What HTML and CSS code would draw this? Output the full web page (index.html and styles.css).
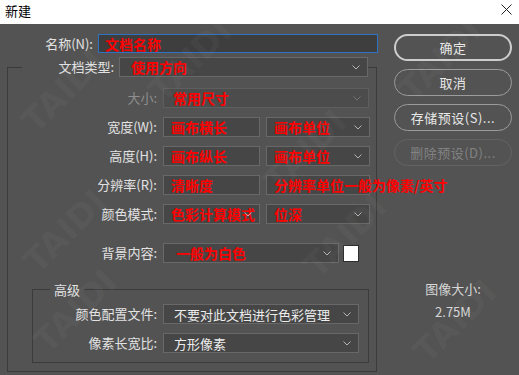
FILE: index.html
```html
<!DOCTYPE html>
<html lang="zh-CN">
<head>
<meta charset="utf-8">
<title>新建</title>
<link rel="stylesheet" href="styles.css">
</head>
<body>
<div class="titlebar">
  <span class="title">新建</span>
  <svg class="close" width="11" height="11" viewBox="0 0 11 11"><path d="M0.5 0.5 L10.5 10.5 M10.5 0.5 L0.5 10.5" stroke="#222" stroke-width="1" fill="none"/></svg>
</div>
<div class="main">
  <div class="left">
    <div class="row name-row">
      <span class="lbl lbl-name">名称(N):</span>
      <div class="box field-name"><span class="val">文档名称</span></div>
    </div>
    <fieldset class="group">
      <legend class="group-head">
        <div class="row">
          <span class="lbl lbl-type">文档类型:</span>
          <div class="box select sel-type"><span class="val indent">使用方向</span><svg class="chev" viewBox="0 0 8 5"><polyline points="0.5,0.5 4,4 7.5,0.5"/></svg></div>
        </div>
      </legend>
      <div class="rows">
        <div class="row">
          <span class="lbl lbl-main dis">大小:</span>
          <div class="box select disabled sel-size"><span class="val">常用尺寸</span><svg class="chev" viewBox="0 0 8 5"><polyline points="0.5,0.5 4,4 7.5,0.5"/></svg></div>
        </div>
        <div class="row">
          <span class="lbl lbl-main">宽度(W):</span>
          <div class="box inp-num"><span class="val">画布横长</span></div>
          <div class="box select sel-unit"><span class="val">画布单位</span><svg class="chev" viewBox="0 0 8 5"><polyline points="0.5,0.5 4,4 7.5,0.5"/></svg></div>
        </div>
        <div class="row">
          <span class="lbl lbl-main">高度(H):</span>
          <div class="box inp-num"><span class="val">画布纵长</span></div>
          <div class="box select sel-unit"><span class="val">画布单位</span><svg class="chev" viewBox="0 0 8 5"><polyline points="0.5,0.5 4,4 7.5,0.5"/></svg></div>
        </div>
        <div class="row">
          <span class="lbl lbl-main">分辨率(R):</span>
          <div class="box inp-num"><span class="val">清晰度</span></div>
          <div class="box select sel-unit"><span class="val">分辨率单位一般为像素/英寸</span></div>
        </div>
        <div class="row">
          <span class="lbl lbl-main">颜色模式:</span>
          <div class="box select inp-num"><span class="val">色彩计算模式</span><svg class="chev" viewBox="0 0 8 5"><polyline points="0.5,0.5 4,4 7.5,0.5"/></svg></div>
          <div class="box select sel-unit"><span class="val">位深</span><svg class="chev" viewBox="0 0 8 5"><polyline points="0.5,0.5 4,4 7.5,0.5"/></svg></div>
        </div>
        <div class="row bg-row">
          <span class="lbl lbl-main">背景内容:</span>
          <div class="box select sel-bg"><span class="val indent">一般为白色</span><svg class="chev" viewBox="0 0 8 5"><polyline points="0.5,0.5 4,4 7.5,0.5"/></svg></div>
          <div class="swatch"></div>
        </div>
      </div>
      <fieldset class="adv">
        <legend class="adv-head">高级</legend>
        <div class="rows">
          <div class="row">
            <span class="lbl lbl-adv">颜色配置文件:</span>
            <div class="box select sel-adv"><span class="val plain">不要对此文档进行色彩管理</span><svg class="chev" viewBox="0 0 8 5"><polyline points="0.5,0.5 4,4 7.5,0.5"/></svg></div>
          </div>
          <div class="row">
            <span class="lbl lbl-adv">像素长宽比:</span>
            <div class="box select sel-adv"><span class="val plain">方形像素</span><svg class="chev" viewBox="0 0 8 5"><polyline points="0.5,0.5 4,4 7.5,0.5"/></svg></div>
          </div>
        </div>
      </fieldset>
    </fieldset>
  </div>
  <div class="right">
    <div class="btn btn-default">确定</div>
    <div class="btn">取消</div>
    <div class="btn">存储预设(S)...</div>
    <div class="btn btn-disabled">删除预设(D)...</div>
    <div class="info">
      <div>图像大小:</div>
      <div class="info-val">2.75M</div>
    </div>
  </div>
</div>
<div class="wm">
  <span class="wm1">TAIDI</span>
  <span class="wm2">TAIDI</span>
  <span class="wm3">TAIDI</span>
  <span class="wm4">TAIDI</span>
  <span class="wm5">TAIDI</span>
  <span class="wm6">TAIDI</span>
  <span class="wm7">TAIDI</span>
  <span class="wm8">TAIDI</span>
</div>
</body>
</html>
```
FILE: styles.css
```css
html, body {
  margin: 0;
  padding: 0;
}
body {
  width: 519px;
  height: 375px;
  overflow: hidden;
  position: relative;
  background: #535353;
  font-family: "Noto Sans CJK SC", "Noto Sans", sans-serif;
  font-size: 13px;
  color: #e0e0e0;
}
.titlebar {
  height: 24px;
  background: #ffffff;
  display: flex;
  justify-content: space-between;
  align-items: flex-start;
  padding: 0 7px 0 5px;
  color: #000;
}
.title {
  font-size: 13px;
  line-height: 22px;
}
.close {
  margin-top: 4px;
}
.main {
  display: flex;
  padding-top: 10px;
}
.left {
  width: 378px;
  flex: none;
}
.right {
  width: 118px;
  margin-left: 16px;
  flex: none;
  display: flex;
  flex-direction: column;
  gap: 8px;
}
.row {
  display: flex;
  align-items: center;
  height: 20px;
}
.lbl {
  flex: none;
  text-align: right;
  white-space: nowrap;
  line-height: 20px;
  color: #e2e2e2;
}
.lbl.dis {
  color: #8e8e8e;
}
.box {
  box-sizing: border-box;
  height: 20px;
  flex: none;
  background: #464646;
  border: 1px solid #686868;
  display: flex;
  align-items: center;
  padding-left: 7px;
}
.val {
  color: #ff0000;
  font-weight: 700;
  font-size: 14px;
  line-height: 1;
  white-space: nowrap;
}
.val.indent {
  padding-left: 5px;
}
.val.plain {
  color: #ececec;
  font-weight: 400;
  font-size: 13px;
  padding-left: 3px;
}
.select .val {
  flex: 1;
  min-width: 0;
}
.chev {
  flex: none;
  width: 8px;
  height: 5px;
  margin: 0 7px 0 3px;
  fill: none;
  stroke: #b4b4b4;
  stroke-width: 1;
}
.disabled {
  background: #4c4c4c;
  border-color: #5e5e5e;
}
.disabled .chev {
  stroke: #747474;
}
.name-row {
  height: 19px;
}
.lbl-name {
  width: 93px;
  margin-right: 5px;
}
.field-name {
  width: 280px;
  height: 19px;
  background: #3e3e3e;
  border: 1px solid #2f72c4;
  padding-left: 6px;
}
fieldset {
  min-width: 0;
  border: 1px solid #3b3b3b;
}
.group {
  margin: 4px 1px 0 7px;
  padding: 11px 7px 8px 0;
}
.group-head {
  margin-left: 14px;
  padding: 0;
}
.lbl-type {
  width: 92px;
  margin-right: 5px;
}
.sel-type {
  width: 249px;
  padding-left: 6px;
}
.rows {
  display: flex;
  flex-direction: column;
  gap: 9px;
}
.rows .bg-row {
  margin-top: 10px;
}
.lbl-main {
  width: 149px;
  margin-right: 6px;
}
.sel-size {
  width: 206px;
  padding-left: 9px;
}
.inp-num {
  width: 97px;
  margin-right: 6px;
}
.sel-unit {
  width: 104px;
}
.sel-bg {
  width: 176px;
  margin-right: 4px;
}
.swatch {
  flex: none;
  width: 16px;
  height: 17px;
  box-sizing: border-box;
  background: #ffffff;
  border: 1px solid #2e2e2e;
}
.adv {
  margin: 19px 0 0 24px;
  padding: 7px 0 9px 0;
}
.adv-head {
  margin-left: 17px;
  padding: 0 4px;
  font-size: 13px;
  line-height: 15px;
  color: #e2e2e2;
}
.lbl-adv {
  width: 124px;
  margin-right: 6px;
}
.sel-adv {
  width: 196px;
}
.btn {
  box-sizing: border-box;
  height: 27px;
  border: 1px solid #9c9c9c;
  border-radius: 14px;
  display: flex;
  align-items: center;
  justify-content: center;
  color: #e8e8e8;
  font-size: 13px;
  letter-spacing: 0.5px;
}
.btn-default {
  border: 2px solid #cdcdcd;
}
.btn-disabled {
  border-color: #636363;
  color: #828282;
}
.info {
  margin-top: 107px;
  text-align: center;
  line-height: 16px;
  color: #d6d6d6;
}
.info-val {
  margin-top: 7px;
}
.wm {
  position: absolute;
  left: 0;
  top: 0;
  width: 519px;
  height: 375px;
  overflow: hidden;
  pointer-events: none;
}
.wm span {
  position: absolute;
  width: 110px;
  height: 42px;
  line-height: 42px;
  text-align: center;
  font-family: "DejaVu Sans", sans-serif;
  font-weight: 700;
  font-size: 34px;
  color: rgba(255, 255, 255, 0.04);
  transform: rotate(-45deg);
}
.wm1 { left: 135px; top: 39px; }
.wm2 { left: 385px; top: 39px; }
.wm3 { left: 8px; top: 70px; }
.wm4 { left: 250px; top: 130px; }
.wm5 { left: 10px; top: 210px; }
.wm6 { left: 290px; top: 215px; }
.wm7 { left: 20px; top: 290px; }
.wm8 { left: 400px; top: 300px; }
```
